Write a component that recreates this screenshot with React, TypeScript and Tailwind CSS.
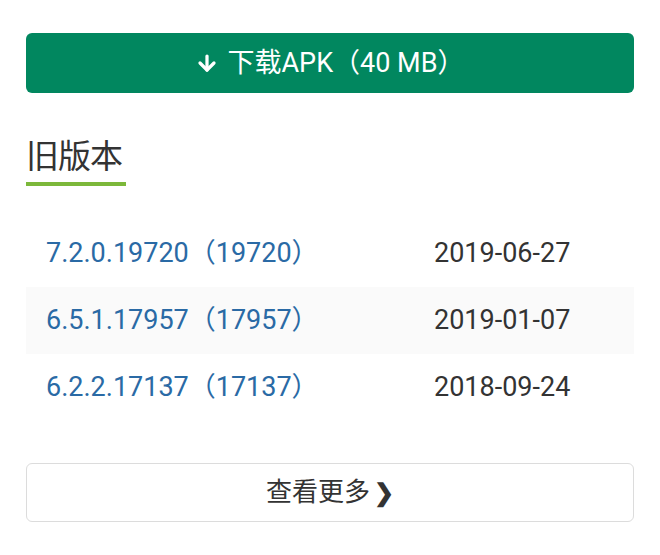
import { ArrowDown } from "lucide-react";

const versions = [
  { name: "7.2.0.19720（19720）", date: "2019-06-27" },
  { name: "6.5.1.17957（17957）", date: "2019-01-07" },
  { name: "6.2.2.17137（17137）", date: "2018-09-24" },
];

export default function App() {
  return (
    <div
      className="w-[660px] h-[555px] bg-white px-[26px] pt-[33px] overflow-hidden"
      style={{ fontFamily: "Roboto, 'Noto Sans CJK SC', sans-serif" }}
    >
      {/* Download button */}
      <button className="w-full h-[60px] rounded-[6px] bg-[#01875f] text-white text-[27px] flex items-center justify-center gap-[8px]">
        <ArrowDown size={24} strokeWidth={3.25} />
        <span>下载APK（40 MB）</span>
      </button>

      {/* Old versions heading */}
      <div className="mt-[40px] inline-flex flex-col">
        <h2 className="text-[33px] leading-[48px] text-[#333] tracking-[-1px]">旧版本</h2>
        <div className="mt-[1px] h-[4px] w-[100px] bg-[#7cb83a]" />
      </div>

      {/* Version list */}
      <div className="mt-[34px] flex flex-col">
        {versions.map((v, i) => (
          <div
            key={v.name}
            className={`h-[67px] grid grid-cols-[388px_1fr] items-center pl-[20px] text-[27px] ${i % 2 === 1 ? "bg-[#fafafa]" : ""}`}
          >
            <span className="text-[#2a6aa5]">{v.name}</span>
            <span className="text-[#333]">{v.date}</span>
          </div>
        ))}
      </div>

      {/* Load more */}
      <button className="mt-[42px] w-full h-[59px] rounded-[6px] border-[1.5px] border-[#dcdcdc] bg-white text-[#333] text-[26px] flex items-center justify-center">
        <span>查看更多</span>
        <span className="ml-[4px] text-[24px] font-bold">❯</span>
      </button>
    </div>
  );
}
